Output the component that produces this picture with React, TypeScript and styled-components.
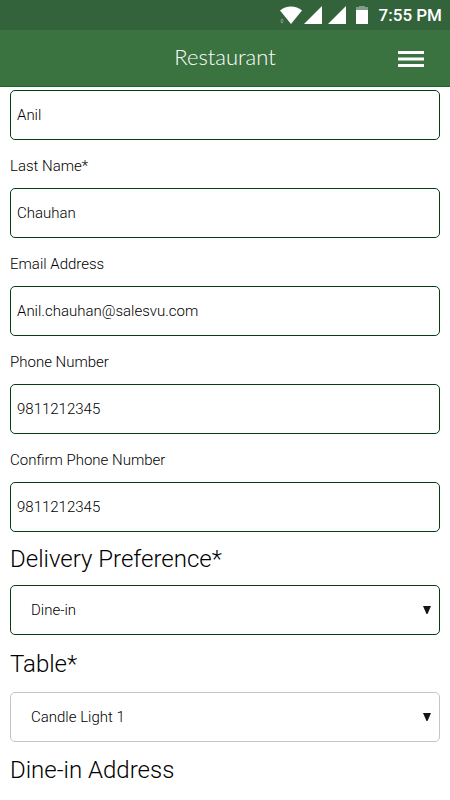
import React from "react";
import styled, { createGlobalStyle } from "styled-components";

const GlobalStyle = createGlobalStyle`
  *, *::before, *::after { box-sizing: border-box; }
  body {
    margin: 0;
    background: #fff;
    color: #000;
    font-family: "Roboto", sans-serif;
    font-weight: 300;
  }
`;

const StatusBar = styled.div`
  display: flex;
  align-items: center;
  justify-content: flex-end;
  height: 30px;
  padding: 0 8px;
  background: #32633a;
  color: #fff;
  font: 500 17px/30px "Roboto", sans-serif;
`;

const StatusIcons = styled.svg`
  display: block;
  margin-right: 10px;
`;

const Header = styled.header`
  display: grid;
  grid-template-columns: 1fr auto 1fr;
  align-items: center;
  height: 57px;
  padding: 0 26px;
  background: #3a7340;
  border-bottom: 1px solid #17682a;
`;

const Title = styled.h1`
  grid-column: 2;
  margin: 0;
  padding-bottom: 2px;
  color: #fff;
  font: 300 22px/28px "Lato", sans-serif;
`;

const MenuButton = styled.button`
  justify-self: end;
  padding: 2px 0 0;
  border: 0;
  background: none;
  color: #fff;
  cursor: pointer;
`;

const MenuIcon = styled.svg`
  display: block;
`;

const Form = styled.form`
  display: flex;
  flex-direction: column;
  padding: 3px 10px;
`;

const Label = styled.label`
  height: 48px;
  padding-top: 4px;
  font-size: 15px;
  line-height: 44px;
`;

const Heading = styled.label<{ $compact?: boolean }>`
  padding-top: 2px;
  font-size: 24px;
  line-height: ${(p) => (p.$compact ? 51 : 55)}px;
`;

const SectionTitle = styled.h2`
  margin: 0;
  font-size: 24px;
  font-weight: 300;
  line-height: 57px;
`;

const Input = styled.input`
  width: 100%;
  height: 50px;
  padding: 0 6px;
  border: 1px solid #063d10;
  border-radius: 5px;
  background: #fff;
  color: #000;
  font: inherit;
  font-size: 15px;
`;

const SelectBox = styled.div`
  position: relative;
`;

const Select = styled.select<{ $muted?: boolean }>`
  appearance: none;
  display: block;
  width: 100%;
  height: 50px;
  padding: 0 30px 0 20px;
  border: 1px solid ${(p) => (p.$muted ? "#c4c4c4" : "#063d10")};
  border-radius: 5px;
  background: #fff;
  color: #000;
  font: inherit;
  font-size: 15px;
`;

const Arrow = styled.svg`
  position: absolute;
  top: 21px;
  right: 9px;
  pointer-events: none;
`;

const fields = [
  { id: "first", label: "", type: "text", value: "Anil" },
  { id: "last", label: "Last Name*", type: "text", value: "Chauhan" },
  { id: "email", label: "Email Address", type: "email", value: "Anil.chauhan@salesvu.com" },
  { id: "phone", label: "Phone Number", type: "tel", value: "9811212345" },
  { id: "confirm", label: "Confirm Phone Number", type: "tel", value: "9811212345" },
];

function DropDown({ id, option, muted }: { id: string; option: string; muted?: boolean }) {
  return (
    <SelectBox>
      <Select id={id} $muted={muted} defaultValue={option}>
        <option>{option}</option>
      </Select>
      <Arrow width="8" height="8" viewBox="0 0 8 8" aria-hidden="true">
        <path d="M0 0H8L4.5 8H3.5Z" fill="#151515" />
      </Arrow>
    </SelectBox>
  );
}

export default function App() {
  return (
    <>
      <GlobalStyle />
      <StatusBar>
        <StatusIcons width="90" height="20" viewBox="0 0 90 20" aria-hidden="true">
          <path d="M1 5.5C7 .3 17 .3 23 5.5L12 19Z" fill="#fff" />
          <path d="M3 13.5L5 15.5H1ZM1 16.5H5L3 18.5Z" fill="#7f9e84" />
          <path d="M43 1V19H25Z" fill="#fff" />
          <path d="M67 1V19H49Z" fill="#fff" />
          <path d="M80 1H86V2H89V6H77V2H80Z" fill="#7f9e84" />
          <path d="M77 5H89V19H77Z" fill="#fff" />
        </StatusIcons>
        <span>7:55 PM</span>
      </StatusBar>
      <Header>
        <Title>Restaurant</Title>
        <MenuButton type="button" aria-label="Menu">
          <MenuIcon width="26" height="18" viewBox="0 0 26 18" aria-hidden="true">
            <path d="M0 1H26V4H0ZM0 7.5H26V10.5H0ZM0 14H26V17H0Z" fill="currentColor" />
          </MenuIcon>
        </MenuButton>
      </Header>
      <Form>
        {fields.map((f) => (
          <React.Fragment key={f.id}>
            {f.label && <Label htmlFor={f.id}>{f.label}</Label>}
            <Input
              id={f.id}
              type={f.type}
              defaultValue={f.value}
              aria-label={f.label ? undefined : "First Name"}
            />
          </React.Fragment>
        ))}
        <Heading htmlFor="delivery" $compact>Delivery Preference*</Heading>
        <DropDown id="delivery" option="Dine-in" />
        <Heading htmlFor="table">Table*</Heading>
        <DropDown id="table" option="Candle Light 1" muted />
        <SectionTitle>Dine-in Address</SectionTitle>
      </Form>
    </>
  );
}
